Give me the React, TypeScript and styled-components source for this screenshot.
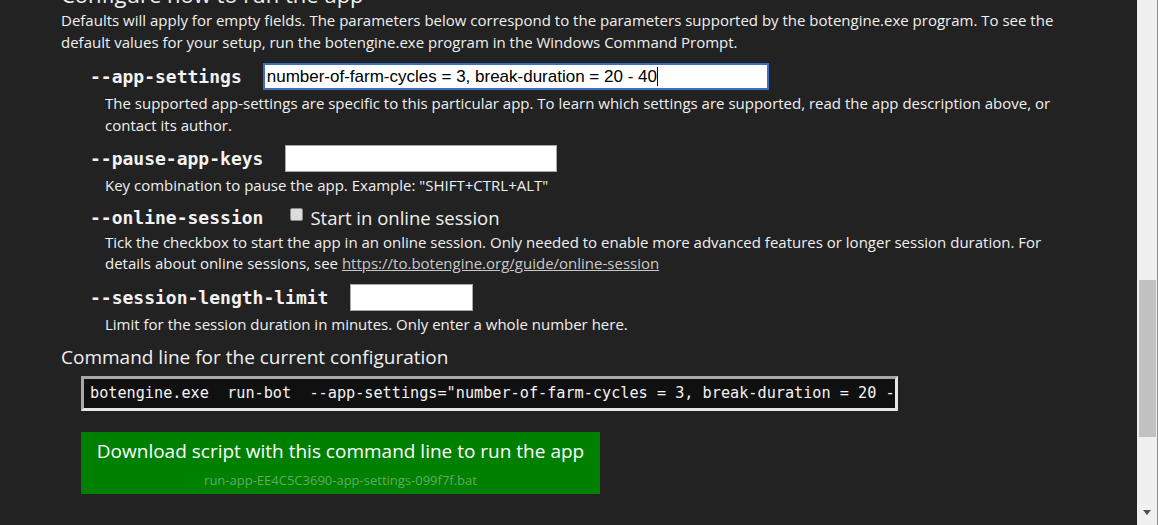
import React from "react";
import styled, { createGlobalStyle } from "styled-components";

const GlobalStyle = createGlobalStyle`
  html, body {
    margin: 0;
    padding: 0;
    background: #222222;
    overflow: hidden;
  }
  body {
    font-family: "Open Sans", "Noto Sans", sans-serif;
    color: #f0f0f0;
  }
`;

const Frame = styled.div`
  display: flex;
  width: 1158px;
  height: 525px;
  overflow: hidden;
`;

const Main = styled.main`
  flex: 1;
  padding: 0 60px 0 61px;
  overflow: hidden;
`;

const Heading = styled.h2`
  margin: -21px 0 0;
  font-size: 22px;
  font-weight: 400;
  line-height: 30px;
`;

const Para = styled.p`
  margin: 0;
  font-size: 15px;
  line-height: 22px;
`;

const Options = styled.div`
  margin-top: 10px;
  padding-left: 29px;
`;

const Option = styled.div`
  margin-bottom: 9px;
`;

const Row = styled.div<{ $compact?: boolean }>`
  display: flex;
  align-items: center;
  min-height: ${(p) => (p.$compact ? 23 : 27)}px;
`;

const Flag = styled.span`
  font-family: "DejaVu Sans Mono", "Liberation Mono", monospace;
  font-weight: 700;
  font-size: 18px;
  line-height: 23px;
  color: #f2f2f2;
`;

const TextInput = styled.div<{ $width: number; $focused?: boolean }>`
  box-sizing: border-box;
  width: ${(p) => p.$width}px;
  height: 27px;
  margin-left: ${(p) => (p.$focused ? 21 : 22)}px;
  background: #ffffff;
  border: ${(p) => (p.$focused ? "2px solid #3a6fc4" : "1px solid #a9a9a9")};
  font-family: "Liberation Sans", Arial, sans-serif;
  font-size: 17px;
  line-height: 23px;
  color: #000;
  padding-left: 2px;
  white-space: nowrap;
  overflow: hidden;
`;

const Caret = styled.span`
  display: inline-block;
  width: 1px;
  height: 19px;
  background: #000;
  vertical-align: -4px;
`;

const CheckLabel = styled.label`
  display: flex;
  align-items: center;
  margin-left: 27px;
  font-size: 18.5px;
  line-height: 23px;
`;

const Box = styled.span`
  box-sizing: border-box;
  width: 13px;
  height: 13px;
  margin-right: 7px;
  margin-top: -5px;
  background: #dcdcdc;
  border: 1px solid #8a8a8a;
  border-radius: 2px;
`;

const Desc = styled.div`
  margin-top: 3px;
  padding-left: 15px;
  font-size: 15px;
  line-height: 21.5px;
`;

const Link = styled.a`
  color: #c8c8c8;
  text-decoration: underline;
`;

const SubHeading = styled.h3`
  margin: 8px 0 0;
  font-size: 19px;
  font-weight: 400;
  line-height: 26px;
`;

const CommandBox = styled.div`
  box-sizing: border-box;
  width: 817px;
  height: 35px;
  margin: 6px 0 0 20px;
  background: #101010;
  border-top: 3px solid #a8a8a8;
  border-left: 3px solid #a8a8a8;
  border-bottom: 3px solid #e6e6e6;
  border-right: 3px solid #e6e6e6;
  padding: 0 6px;
  font-family: "DejaVu Sans Mono", "Liberation Mono", monospace;
  font-size: 15.2px;
  line-height: 29px;
  white-space: pre;
  overflow: hidden;
  color: #f4f4f4;
`;

const DownloadButton = styled.div`
  display: inline-flex;
  flex-direction: column;
  align-items: center;
  box-sizing: border-box;
  width: 519px;
  height: 62px;
  margin: 21px 0 0 20px;
  padding-top: 5px;
  background: #008000;
  cursor: pointer;
`;

const ButtonTitle = styled.span`
  font-size: 19px;
  line-height: 28px;
  color: #ffffff;
`;

const FileName = styled.span`
  margin-top: 6px;
  font-size: 13px;
  line-height: 18px;
  color: #62aa62;
`;

const Scrollbar = styled.div`
  display: flex;
  flex-direction: column;
  align-items: center;
  width: 20px;
  height: 525px;
  background: #f0f0f0;
  border-right: 1px solid #8c8c8c;
`;

const Track = styled.div`
  flex: 1;
  width: 100%;
  padding-top: 280px;
  box-sizing: border-box;
  display: flex;
  justify-content: center;
`;

const Thumb = styled.div`
  width: 17px;
  height: 157px;
  background: #c1c1c1;
`;

const Arrow = styled.div`
  width: 0;
  height: 0;
  margin-bottom: 10px;
  border-left: 4.5px solid transparent;
  border-right: 4.5px solid transparent;
  border-top: 5px solid #505050;
`;

export default function App() {
  return (
    <>
      <GlobalStyle />
      <Frame>
        <Main>
          <Heading>Configure how to run the app</Heading>
          <Para>
            Defaults will apply for empty fields. The parameters below correspond to the parameters
            supported by the botengine.exe program. To see the default values for your setup, run the
            botengine.exe program in the Windows Command Prompt.
          </Para>
          <Options>
            <Option>
              <Row>
                <Flag>--app-settings</Flag>
                <TextInput $width={506} $focused>
                  number-of-farm-cycles = 3, break-duration = 20 - 40
                  <Caret />
                </TextInput>
              </Row>
              <Desc>
                The supported app-settings are specific to this particular app. To learn which settings
                are supported, read the app description above, or contact its author.
              </Desc>
            </Option>
            <Option>
              <Row>
                <Flag>--pause-app-keys</Flag>
                <TextInput $width={272} />
              </Row>
              <Desc>Key combination to pause the app. Example: "SHIFT+CTRL+ALT"</Desc>
            </Option>
            <Option>
              <Row $compact>
                <Flag>--online-session</Flag>
                <CheckLabel>
                  <Box />
                  Start in online session
                </CheckLabel>
              </Row>
              <Desc>
                Tick the checkbox to start the app in an online session. Only needed to enable more
                advanced features or longer session duration. For details about online sessions, see{" "}
                <Link href="#">https://to.botengine.org/guide/online-session</Link>
              </Desc>
            </Option>
            <Option>
              <Row>
                <Flag>--session-length-limit</Flag>
                <TextInput $width={123} />
              </Row>
              <Desc>Limit for the session duration in minutes. Only enter a whole number here.</Desc>
            </Option>
          </Options>
          <SubHeading>Command line for the current configuration</SubHeading>
          <CommandBox>
            {'botengine.exe  run-bot  --app-settings="number-of-farm-cycles = 3, break-duration = 20 - 40"'}
          </CommandBox>
          <DownloadButton>
            <ButtonTitle>Download script with this command line to run the app</ButtonTitle>
            <FileName>run-app-EE4C5C3690-app-settings-099f7f.bat</FileName>
          </DownloadButton>
        </Main>
        <Scrollbar>
          <Track>
            <Thumb />
          </Track>
          <Arrow />
        </Scrollbar>
      </Frame>
    </>
  );
}
